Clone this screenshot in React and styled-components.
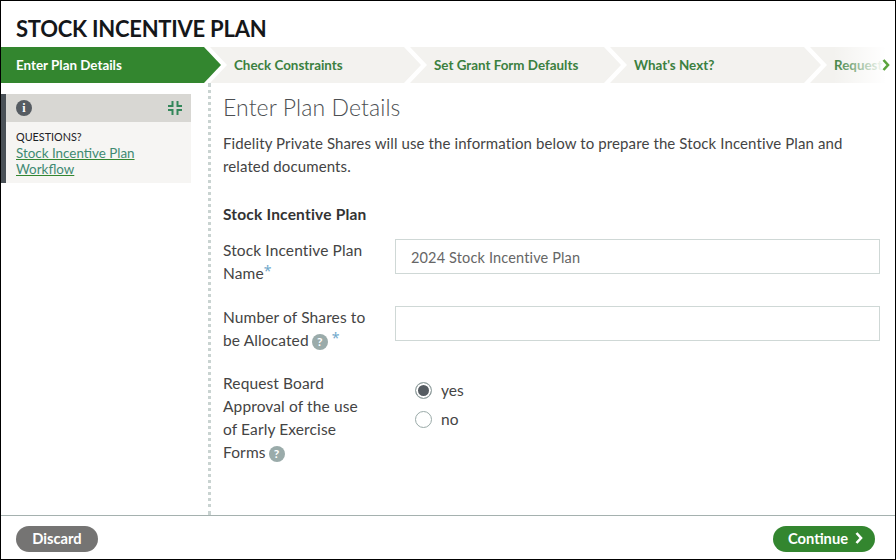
import React from 'react';
import styled, { createGlobalStyle } from 'styled-components';

const GlobalStyle = createGlobalStyle`
  html, body {
    margin: 0;
    padding: 0;
    background: #fff;
  }
  * {
    box-sizing: border-box;
  }
`;

const Page = styled.div`
  width: 896px;
  height: 560px;
  display: flex;
  flex-direction: column;
  border: 1px solid #000;
  font-family: Lato, "Noto Sans", sans-serif;
  color: #444;
  overflow: hidden;
`;

const Title = styled.h1`
  margin: 0;
  height: 46px;
  padding: 14px 0 0 15px;
  font-size: 22px;
  line-height: 28px;
  font-weight: 700;
  letter-spacing: -0.25px;
  color: #15171a;
`;

const Steps = styled.div`
  position: relative;
  display: flex;
  height: 36px;
  flex: none;
  overflow: hidden;
`;

const Step = styled.div`
  flex: none;
  width: ${({ $active }) => ($active ? 220 : 211)}px;
  margin-right: -11px;
  padding-left: ${({ $active }) => ($active ? 15 : 24)}px;
  display: flex;
  align-items: center;
  font-size: 13.4px;
  font-weight: 700;
  white-space: nowrap;
  color: ${({ $active }) => ($active ? '#fff' : '#3b8040')};
  background: ${({ $active }) => ($active ? '#33862f' : '#f3f2ef')};
  clip-path: ${({ $active }) =>
    $active
      ? 'polygon(0 0, calc(100% - 17px) 0, 100% 50%, calc(100% - 17px) 100%, 0 100%)'
      : 'polygon(0 0, calc(100% - 17px) 0, 100% 50%, calc(100% - 17px) 100%, 0 100%, 17px 50%)'};
`;

const StepsFade = styled.div`
  position: absolute;
  top: 0;
  right: 0;
  bottom: 0;
  width: 62px;
  display: flex;
  align-items: center;
  justify-content: flex-end;
  padding-right: 5px;
  background: linear-gradient(to right, rgba(255, 255, 255, 0), #fff 85%);
`;

const Body = styled.div`
  flex: 1;
  display: flex;
  min-height: 0;
`;

const Sidebar = styled.aside`
  flex: none;
  width: 207px;
  padding-top: 11px;
`;

const HelpCard = styled.div`
  width: 190px;
  border-left: 5px solid #4a5157;
  background: #f6f5f3;
`;

const HelpHeader = styled.div`
  height: 28px;
  padding: 0 9px 0 10px;
  display: flex;
  align-items: center;
  justify-content: space-between;
  background: #d8d7d3;
`;

const InfoBadge = styled.span`
  width: 16px;
  height: 16px;
  border-radius: 50%;
  display: flex;
  align-items: center;
  justify-content: center;
  background: #565c62;
  color: #fff;
  font: 700 12px "Liberation Serif", serif;
`;

const HelpBody = styled.div`
  padding: 6px 10px 6px;
`;

const HelpLabel = styled.div`
  font-size: 10.8px;
  line-height: 17px;
  color: #1c2024;
`;

const HelpLink = styled.a`
  display: block;
  font-size: 13.4px;
  line-height: 16px;
  color: #3f8a72;
  text-decoration: underline;
  text-decoration-color: #33862f;
`;

const Main = styled.main`
  flex: 1;
  border-left: 3px dotted #c9d3d1;
  padding: 10px 15px 0 12px;
`;

const Heading = styled.h2`
  margin: 0;
  font-size: 23px;
  line-height: 28px;
  font-weight: 300;
  letter-spacing: 0.1px;
  color: #4c4f52;
`;

const Intro = styled.p`
  margin: 11px 0 0;
  font-size: 15px;
  line-height: 23px;
  letter-spacing: 0.11px;
  color: #444;
`;

const SectionTitle = styled.h3`
  margin: 25px 0 0;
  font-size: 15.5px;
  line-height: 23px;
  font-weight: 700;
  letter-spacing: 0.2px;
  color: #333;
`;

const FormRow = styled.div`
  display: grid;
  grid-template-columns: 172px 1fr;
  margin-top: ${({ $gap }) => $gap}px;
`;

const Label = styled.label`
  width: 146px;
  font-size: 15.5px;
  line-height: 23px;
  letter-spacing: 0.12px;
  color: #444;
`;

const Required = styled.span`
  font: 400 14px "Noto Sans", sans-serif;
  line-height: 0;
  vertical-align: 3px;
  color: #6fa8cb;
`;

const HelpDot = styled.span`
  display: inline-flex;
  align-items: center;
  justify-content: center;
  width: 16px;
  height: 16px;
  margin-left: 3px;
  border-radius: 50%;
  vertical-align: 0;
  line-height: 16px;
  background: #9aabaa;
  color: #fff;
  font-size: 12px;
  font-weight: 700;
`;

const TextInput = styled.input`
  width: 100%;
  height: 35px;
  padding: 1px 15px 0;
  border: 1px solid #cfd8d6;
  border-radius: 0;
  outline: none;
  font: 400 14.5px Lato, "Noto Sans", sans-serif;
  letter-spacing: 0.15px;
  color: #666;
  background: #fff;
`;

const RadioGroup = styled.div`
  padding: 11px 0 0 20px;
  display: flex;
  flex-direction: column;
  gap: 11px;
  margin-top: -2px;
`;

const RadioRow = styled.div`
  display: flex;
  align-items: center;
  gap: 9px;
  height: 18px;
  font-size: 15.5px;
  color: #444;
`;

const RadioMark = styled.span`
  width: 17px;
  height: 17px;
  border-radius: 50%;
  border: 1px solid #9aaaa8;
  background: ${({ $on }) => ($on ? '#565c62' : '#fff')};
  box-shadow: inset 0 0 0 2px #fff;
`;

const Footer = styled.footer`
  flex: none;
  height: 44px;
  padding: 10px 20px 0 15px;
  display: flex;
  justify-content: space-between;
  border-top: 1px solid #a5b1af;
`;

const Button = styled.button`
  height: 26px;
  width: ${({ $width }) => $width}px;
  padding: 0 0 2px ${({ $primary }) => ($primary ? 3 : 0)}px;
  border: 0;
  border-radius: 13px;
  display: flex;
  align-items: center;
  justify-content: center;
  gap: 7px;
  font: 700 14.7px Lato, "Noto Sans", sans-serif;
  color: #fff;
  background: ${({ $primary }) => ($primary ? '#33862f' : '#757473')};
`;

const Chevron = ({ width, height, weight, color }) => (
  <svg width={width} height={height} viewBox="0 0 8 12" fill="none">
    <path d="M1.5 1l4.5 5-4.5 5" stroke={color} strokeWidth={weight} />
  </svg>
);

const CollapseIcon = () => (
  <svg width="14" height="14" viewBox="0 0 14 14" fill="none" stroke="#33875a" strokeWidth="2">
    <path d="M4.5 0v5H0" />
    <path d="M9.5 0v5H14" />
    <path d="M4.5 14V9H0" />
    <path d="M9.5 14V9H14" />
  </svg>
);

const stepNames = ['Check Constraints', 'Set Grant Form Defaults', "What's Next?", 'Request Approval'];

export default function App() {
  return (
    <>
      <GlobalStyle />
      <Page>
        <Title>STOCK INCENTIVE PLAN</Title>
        <Steps>
          <Step $active>Enter Plan Details</Step>
          {stepNames.map((name) => (
            <Step key={name}>{name}</Step>
          ))}
          <StepsFade>
            <Chevron width={8} height={12} weight={2.6} color="#5aa33c" />
          </StepsFade>
        </Steps>
        <Body>
          <Sidebar>
            <HelpCard>
              <HelpHeader>
                <InfoBadge>i</InfoBadge>
                <CollapseIcon />
              </HelpHeader>
              <HelpBody>
                <HelpLabel>QUESTIONS?</HelpLabel>
                <HelpLink href="#">Stock Incentive Plan Workflow</HelpLink>
              </HelpBody>
            </HelpCard>
          </Sidebar>
          <Main>
            <Heading>Enter Plan Details</Heading>
            <Intro>
              Fidelity Private Shares will use the information below to prepare the Stock Incentive Plan and related documents.
            </Intro>
            <SectionTitle>Stock Incentive Plan</SectionTitle>
            <FormRow $gap={13}>
              <Label>
                Stock Incentive Plan Name<Required>*</Required>
              </Label>
              <TextInput defaultValue="2024 Stock Incentive Plan" />
            </FormRow>
            <FormRow $gap={21}>
              <Label>
                Number of Shares to be Allocated<HelpDot>?</HelpDot> <Required>*</Required>
              </Label>
              <TextInput />
            </FormRow>
            <FormRow $gap={20}>
              <Label>
                Request Board Approval of the use of Early Exercise Forms<HelpDot>?</HelpDot>
              </Label>
              <RadioGroup>
                <RadioRow>
                  <RadioMark $on />
                  yes
                </RadioRow>
                <RadioRow>
                  <RadioMark />
                  no
                </RadioRow>
              </RadioGroup>
            </FormRow>
          </Main>
        </Body>
        <Footer>
          <Button $width={82}>Discard</Button>
          <Button $primary $width={102}>
            Continue
            <Chevron width={8} height={12} weight={2.6} color="#fff" />
          </Button>
        </Footer>
      </Page>
    </>
  );
}
